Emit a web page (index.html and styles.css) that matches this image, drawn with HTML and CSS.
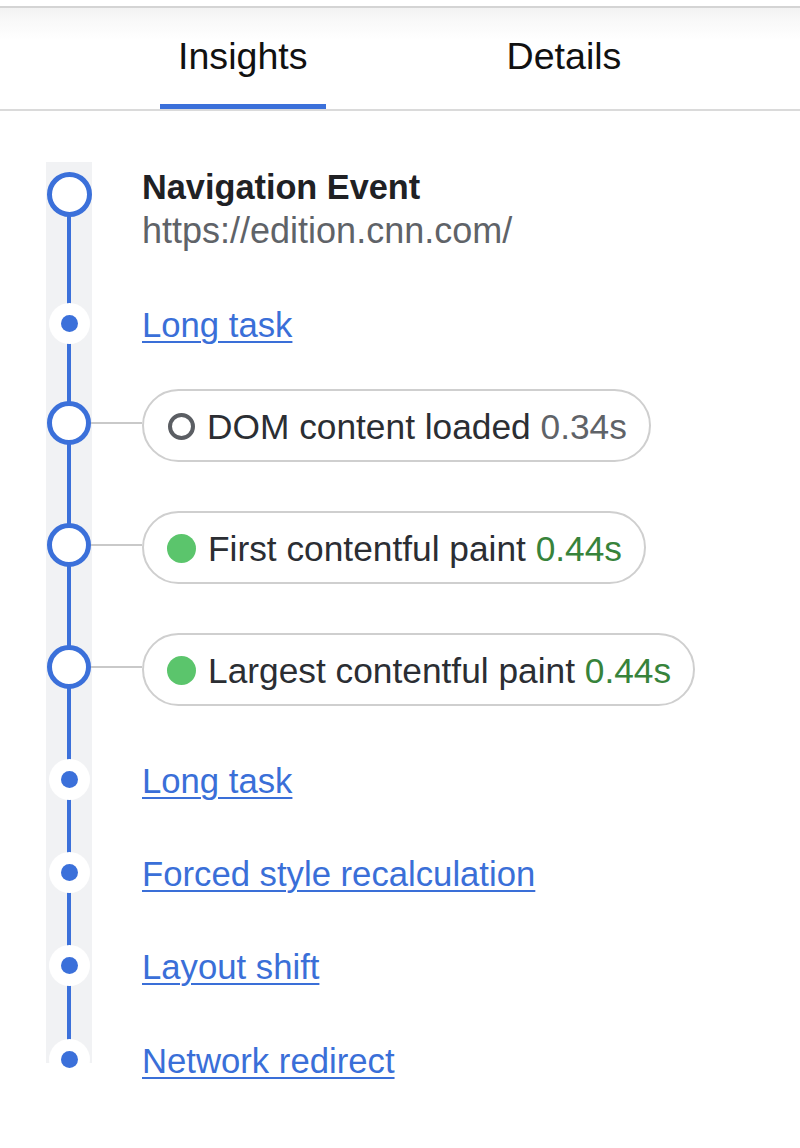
FILE: index.html
```html
<!DOCTYPE html>
<html lang="en">
<head>
<meta charset="utf-8">
<title>Insights</title>
<link rel="stylesheet" href="styles.css">
</head>
<body>
<div class="panel">
  <nav class="tabs">
    <div class="tab active">Insights</div>
    <div class="tab">Details</div>
  </nav>
  <ol class="timeline">
    <li class="row row-nav">
      <span class="marker"><span class="ring ring-nav"></span></span>
      <div class="nav-text">
        <div class="title">Navigation Event</div>
        <div class="url">https://edition.cnn.com/</div>
      </div>
    </li>
    <li class="row row-first">
      <span class="marker"><span class="halo"><span class="dot"></span></span></span>
      <a class="link" href="#">Long task</a>
    </li>
    <li class="row row-pill row-pill-first">
      <span class="marker"><span class="ring"></span></span>
      <span class="connector"></span>
      <span class="pill"><span class="ind ind-hollow"></span><span class="pill-text">DOM content loaded <span class="time">0.34s</span></span></span>
    </li>
    <li class="row row-pill">
      <span class="marker"><span class="ring"></span></span>
      <span class="connector"></span>
      <span class="pill"><span class="ind ind-good"></span><span class="pill-text">First contentful paint <span class="time good">0.44s</span></span></span>
    </li>
    <li class="row row-pill">
      <span class="marker"><span class="ring"></span></span>
      <span class="connector"></span>
      <span class="pill"><span class="ind ind-good"></span><span class="pill-text">Largest contentful paint <span class="time good">0.44s</span></span></span>
    </li>
    <li class="row row-after-pills">
      <span class="marker"><span class="halo"><span class="dot"></span></span></span>
      <a class="link" href="#">Long task</a>
    </li>
    <li class="row">
      <span class="marker"><span class="halo"><span class="dot"></span></span></span>
      <a class="link" href="#">Forced style recalculation</a>
    </li>
    <li class="row">
      <span class="marker"><span class="halo"><span class="dot"></span></span></span>
      <a class="link" href="#">Layout shift</a>
    </li>
    <li class="row row-last">
      <span class="marker"><span class="halo"><span class="dot"></span></span></span>
      <a class="link" href="#">Network redirect</a>
    </li>
  </ol>
</div>
</body>
</html>
```
FILE: styles.css
```css
html, body {
  margin: 0;
  background: #fff;
}

body {
  font-family: "Liberation Sans", Arial, Helvetica, sans-serif;
  color: #202124;
}

.panel {
  margin-top: 6px;
  border-top: 2px solid #d4d4d4;
}

.tabs {
  display: flex;
  height: 101px;
  padding-left: 160px;
  background: linear-gradient(#f2f2f2 0, #f9f9f9 14px, #fff 32px);
  border-bottom: 2px solid #dadada;
}

.tab {
  box-sizing: border-box;
  height: 101px;
  padding: 27px 18px 0;
  font-size: 37.6px;
  line-height: 43px;
  color: #111;
}

.tab.active {
  border-bottom: 5px solid #3b70da;
}

.tab + .tab {
  margin-left: 163px;
}

.timeline {
  list-style: none;
  margin: 0;
  padding: 57px 0 60px 46px;
  position: relative;
}

.timeline::before {
  content: "";
  position: absolute;
  left: 46px;
  width: 46px;
  top: 51px;
  bottom: 77px;
  background: #f1f2f4;
}

.timeline::after {
  content: "";
  position: absolute;
  left: 67px;
  width: 4px;
  top: 83px;
  bottom: 81px;
  background: #3b70da;
}

.row {
  display: flex;
  align-items: center;
  margin-top: 52px;
  position: relative;
  z-index: 1;
}

.row-nav {
  align-items: flex-start;
  margin-top: 0;
}

.row-first {
  margin-top: 53px;
}

.row-pill {
  margin-top: 49px;
}

.row-pill-first {
  margin-top: 45px;
}

.row-after-pills {
  margin-top: 52.5px;
}

.row-last {
  margin-top: 53px;
}

.marker {
  flex: none;
  width: 46px;
  display: flex;
  justify-content: center;
  position: relative;
  z-index: 2;
}

.ring {
  box-sizing: border-box;
  width: 44px;
  height: 44px;
  border: 5px solid #3b70da;
  border-radius: 50%;
  background: #fff;
}

.row-pill .marker {
  margin-top: -6px;
}

.ring-nav {
  width: 45px;
  height: 45px;
  margin-top: 4px;
}

.halo {
  width: 41px;
  height: 41px;
  border-radius: 50%;
  background: #fff;
  display: flex;
  align-items: center;
  justify-content: center;
}

.dot {
  width: 17px;
  height: 17px;
  border-radius: 50%;
  background: #3b70da;
}

.nav-text {
  margin-left: 50px;
}

.title {
  font-weight: 700;
  font-size: 34.3px;
  line-height: 38px;
  color: #202124;
}

.url {
  margin-top: 5px;
  font-size: 36px;
  line-height: 39px;
  color: #5f6368;
}

.link {
  margin: 2px 0 -2px 50px;
  font-size: 34.7px;
  line-height: 41px;
  color: #3a6fd8;
  text-decoration: underline;
  text-decoration-thickness: 2px;
  text-underline-offset: 4px;
}

.connector {
  flex: none;
  width: 54px;
  margin: -6px 0 0 -4px;
  height: 2px;
  background: #c9c9c9;
}

.pill {
  display: flex;
  align-items: center;
  gap: 12px;
  box-sizing: border-box;
  height: 73px;
  padding: 2px 22px 0 23px;
  border: 2px solid #cfcfcf;
  border-radius: 37px;
  white-space: nowrap;
}

.pill-text {
  font-size: 35.3px;
  line-height: 41px;
  color: #2b2e33;
}

.time {
  color: #5f6368;
}

.time.good {
  color: #37833b;
}

.ind {
  flex: none;
  box-sizing: border-box;
  border-radius: 50%;
}

.ind-hollow {
  width: 27px;
  height: 27px;
  margin-left: 1px;
  border: 4px solid #5b5e63;
}

.ind-good {
  width: 29px;
  height: 29px;
  background: #5bc56c;
}
```
